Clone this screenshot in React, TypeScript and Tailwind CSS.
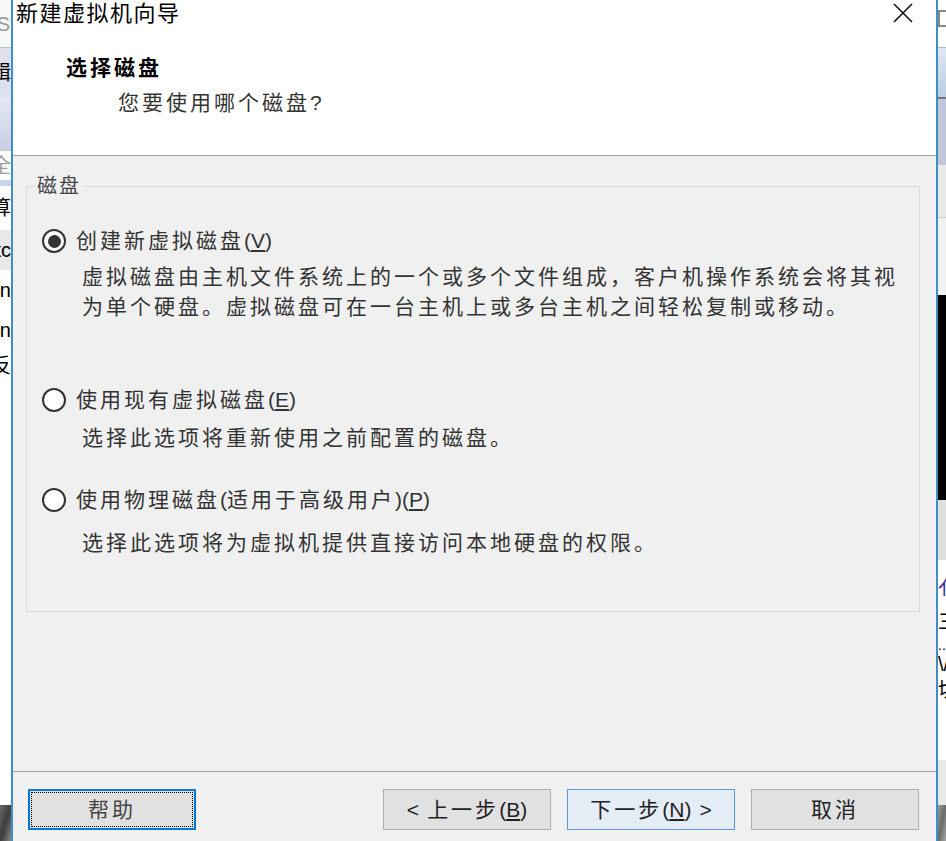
import React from 'react';

const cjk = { fontFamily: '"Liberation Sans", "Noto Sans CJK SC", sans-serif' };

const Radio: React.FC<{ checked?: boolean }> = ({ checked }) => (
  <span className="w-[24px] h-[24px] rounded-full border-2 border-[#333] bg-white flex items-center justify-center shrink-0">
    {checked && <span className="w-[13px] h-[13px] rounded-full bg-[#333]" />}
  </span>
);

const Key: React.FC<{ k: string }> = ({ k }) => (
  <span className="tracking-normal">
    (<span className="underline underline-offset-2">{k}</span>)
  </span>
);

const LeftStrip: React.FC = () => (
  <div className="w-[11px] h-full flex flex-col overflow-hidden text-[20px] leading-none" style={cjk}>
    <div className="h-[47px] bg-[#f7f7f7] flex justify-end items-center text-[#999] whitespace-nowrap pr-[1px]">S</div>
    <div className="h-[50px] bg-[#dde1ee] border-t border-[#b7c3d6] flex justify-end items-center whitespace-nowrap text-black">编辑</div>
    <div className="h-[53px] bg-gradient-to-b from-[#e6e9f4] to-[#c9cde2]" />
    <div className="h-[30px] bg-white border-t border-[#ccc] flex justify-end items-center whitespace-nowrap text-[#999]">安全</div>
    <div className="h-[6px] bg-[#c9d3ea]" />
    <div className="h-[44px] bg-white flex justify-end items-center whitespace-nowrap text-black">计算</div>
    <div className="h-[40px] bg-[#e8e8e8] flex justify-end items-center whitespace-nowrap text-black">etc</div>
    <div className="h-[40px] bg-white flex justify-end items-center whitespace-nowrap text-black">nn</div>
    <div className="h-[40px] bg-white flex justify-end items-center whitespace-nowrap text-black">nn</div>
    <div className="h-[32px] bg-white flex justify-end items-center whitespace-nowrap text-black">反</div>
    <div className="h-[423px] bg-white" />
    <div className="flex-1 bg-gradient-to-br from-[#6a6a6a] via-[#3d3d3d] to-[#8a8a8a]" />
  </div>
);

const RightStrip: React.FC = () => (
  <div className="w-[8px] h-full flex flex-col overflow-hidden text-[20px] leading-none" style={cjk}>
    <div className="h-[47px] bg-white pt-[10px]">
      <div className="w-[14px] h-[17px] border-2 border-[#888]" />
    </div>
    <div className="h-[50px] bg-gradient-to-b from-[#dfe8f2] to-[#b9cde2] border-t border-[#a6bdd6]" />
    <div className="h-[68px] bg-[#c2c6da] border-t-2 border-[#777]" />
    <div className="h-[52px] bg-[#e9e9e9]" />
    <div className="h-[78px] bg-[#f1f1f1] border-t border-[#ccc]" />
    <div className="h-[205px] bg-black" />
    <div className="h-[60px] bg-[#e0e0e0]" />
    <div className="h-[200px] bg-white flex flex-col whitespace-nowrap text-black">
      <div className="mt-[18px] text-[#3c2c9c]">亻</div>
      <div className="mt-[14px]">三</div>
      <div className="mt-[6px] text-[14px]">..</div>
      <div className="mt-[2px]">\/</div>
      <div className="mt-[6px]">切</div>
    </div>
    <div className="h-[45px] bg-[#e8e8e8]" />
    <div className="flex-1 bg-gradient-to-br from-[#9a9a9a] via-[#6b6b6b] to-[#a8a8a8]" />
  </div>
);

const Button: React.FC<{ children: React.ReactNode; variant?: 'focus' | 'default' | 'plain' }> = ({ children, variant = 'plain' }) => {
  if (variant === 'focus') {
    return (
      <div className="w-[168px] h-[41px] border-2 border-[#0078d7] bg-[#e1e1e1] p-[1px]">
        <div className="w-full h-full border border-dotted border-black flex items-center justify-center text-[#444] tracking-[3px]">
          {children}
        </div>
      </div>
    );
  }
  return (
    <div
      className={
        variant === 'default'
          ? 'w-[168px] h-[41px] border border-[#5b9ad6] bg-[#e4edf6] flex items-center justify-center text-[#222] tracking-[3px]'
          : 'w-[168px] h-[41px] border border-[#adadad] bg-[#e1e1e1] flex items-center justify-center text-[#222] tracking-[3px]'
      }
    >
      {children}
    </div>
  );
};

export default function App() {
  return (
    <div className="w-[946px] h-[841px] flex overflow-hidden bg-white" style={cjk}>
      <LeftStrip />

      <div className="w-[927px] h-full border-x-2 border-[#3f8fc4] flex flex-col bg-[#f0f0f0] text-[21px]">
        {/* Header */}
        <div className="h-[156px] bg-white border-b border-[#a0a0a0] relative">
          <div className="h-[28px] leading-[28px] pl-[3px] text-[22px] tracking-[1.5px] text-black">新建虚拟机向导</div>
          <button className="absolute right-[23px] top-[3px] w-[20px] h-[20px]">
            <svg viewBox="0 0 20 20" className="w-[20px] h-[20px]">
              <path d="M1 1 L19 19 M19 1 L1 19" stroke="#111" strokeWidth="1.6" fill="none" />
            </svg>
          </button>
          <div className="mt-[26px] pl-[53px] h-[28px] leading-[28px] font-bold tracking-[3px] text-black">选择磁盘</div>
          <div className="mt-[7px] pl-[105px] h-[28px] leading-[28px] tracking-[3px] text-[#333]">
            您要使用哪个磁盘<span className="tracking-normal">?</span>
          </div>
        </div>

        {/* Body */}
        <div className="flex-1 pt-[18px] pl-[13px] pr-[16px]">
          <fieldset className="border border-[#dcdcdc] pl-[15px] pb-[53px] text-[#333]">
            <legend className="-ml-[7px] px-[2px] h-[24px] leading-[24px] text-[20px] tracking-[2px] text-[#444]">磁盘</legend>

            <div className="mt-[28px] h-[30px] flex items-center gap-[10px]">
              <Radio checked />
              <span className="tracking-[3px]">创建新虚拟磁盘<Key k="V" /></span>
            </div>
            <div className="mt-[6px] pl-[40px] leading-[30px] tracking-[3px]">
              <div>虚拟磁盘由主机文件系统上的一个或多个文件组成，客户机操作系统会将其视</div>
              <div>为单个硬盘。虚拟磁盘可在一台主机上或多台主机之间轻松复制或移动。</div>
            </div>

            <div className="mt-[63px] h-[30px] flex items-center gap-[10px]">
              <Radio />
              <span className="tracking-[3px]">使用现有虚拟磁盘<Key k="E" /></span>
            </div>
            <div className="mt-[8px] pl-[40px] leading-[30px] tracking-[3px]">选择此选项将重新使用之前配置的磁盘。</div>

            <div className="mt-[32px] h-[30px] flex items-center gap-[10px]">
              <Radio />
              <span className="tracking-[3px]">
                使用物理磁盘<span className="tracking-normal">(</span>适用于高级用户<span className="tracking-normal">)</span>
                <Key k="P" />
              </span>
            </div>
            <div className="mt-[13px] pl-[40px] leading-[30px] tracking-[3px]">选择此选项将为虚拟机提供直接访问本地硬盘的权限。</div>
          </fieldset>
        </div>

        {/* Footer */}
        <div className="h-[70px] border-t border-[#a0a0a0] pt-[17px] pl-[15px] pr-[17px] flex items-start text-[21px]">
          <Button variant="focus">帮助</Button>
          <div className="flex-1" />
          <div className="flex gap-[16px]">
            <Button>
              <span className="tracking-normal mr-[8px]">&lt;</span>上一步<Key k="B" />
            </Button>
            <Button variant="default">
              下一步<Key k="N" />
              <span className="tracking-normal ml-[8px]">&gt;</span>
            </Button>
            <Button>取消</Button>
          </div>
        </div>
      </div>

      <RightStrip />
    </div>
  );
}
